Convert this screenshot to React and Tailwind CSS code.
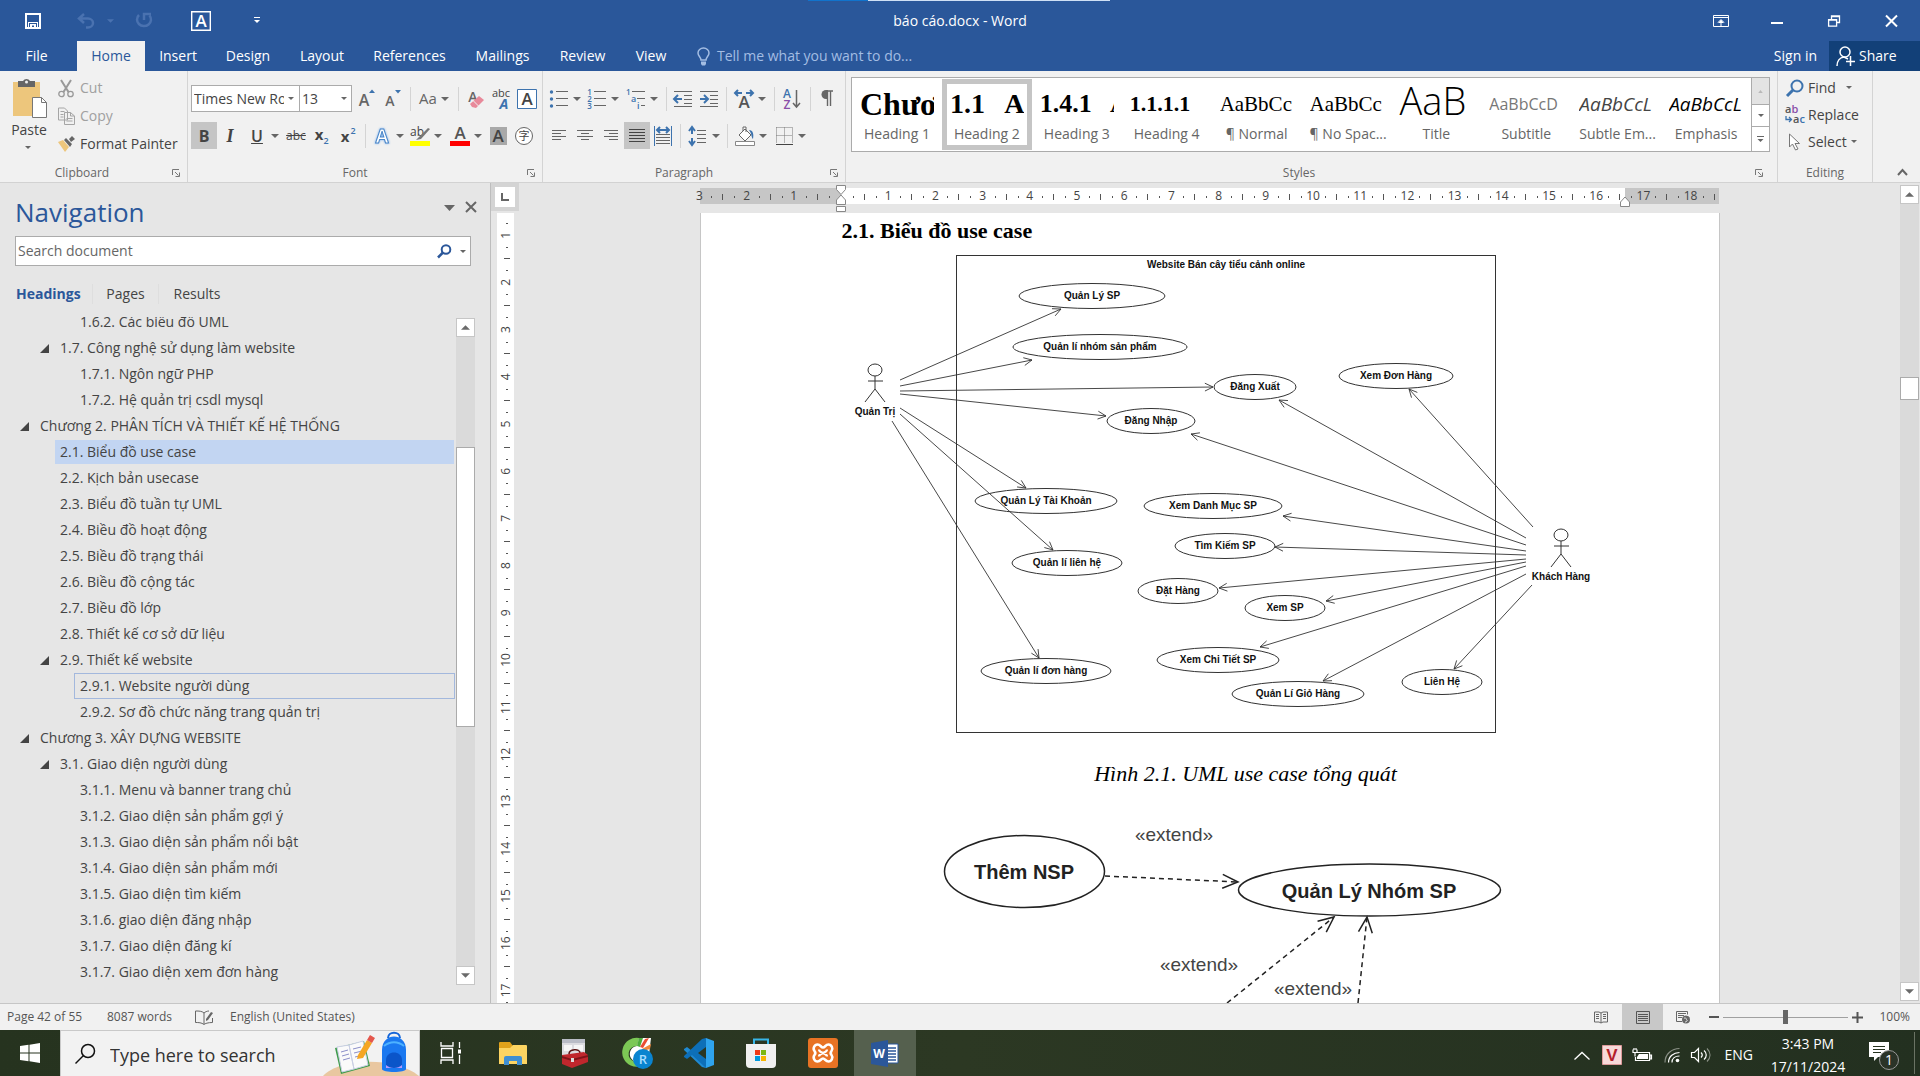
import React from "react";

/* ---------- small helpers ---------- */
const Caret = ({ className = "h-1 w-2" }) => (
  <svg className={"shrink-0 " + className} viewBox="0 0 8 4" aria-hidden="true">
    <path d="M0 0h8L4 4z" fill="#666" />
  </svg>
);

const Icon = ({ children, w = 20, h = 20, className = "" }) => (
  <svg width={w} height={h} viewBox={`0 0 ${w} ${h}`} className={"shrink-0 overflow-visible " + className} fill="none" aria-hidden="true">
    {children}
  </svg>
);

const Tool = ({ label, children, split, active, className = "w-[26px]" }) => (
  <button
    type="button"
    aria-label={label}
    className={"flex h-[27px] shrink-0 items-center justify-center gap-1 " + (active ? "bg-[#c5c5c5] " : "") + className}
  >
    {children}
    {split && <Caret />}
  </button>
);

const Sep = () => (
  <span className="flex h-6 w-2 shrink-0 justify-center">
    <span className="w-px bg-[#d4d4d4]" />
  </span>
);

const GroupLabel = ({ children, launcher = true }) => (
  <div className="mt-auto flex h-[18px] items-center pr-[7px]">
    <span className="flex-1 text-center text-xs text-[#666]">{children}</span>
    {launcher && (
      <button type="button" aria-label={children + " settings"} className="ml-2">
        <Icon w={8} h={8}>
          <path d="M.5 6V.5H7M3 3l3.500 3.500M7.500 3.500v4h-4" stroke="#777" />
        </Icon>
      </button>
    )}
  </div>
);

const sans = "'Open Sans','Noto Sans',sans-serif";
const T = ({ children, ...p }) => (
  <text fontFamily={sans} {...p}>
    {children}
  </text>
);

const lines = (rows, color = "#666") =>
  rows.map(([x1, x2, y], i) => <path key={i} d={`M${x1} ${y}.5H${x2}`} stroke={color} />);

/* ---------- title bar ---------- */
function TitleBar() {
  return (
    <header className="relative grid h-[41px] shrink-0 grid-cols-[1fr_auto_1fr] items-center text-white">
      <div className="absolute left-[808px] top-0 flex h-px w-[302px]">
        <span className="w-[60px] bg-[#1173cc]" />
        <span className="flex-1 bg-[#cfe0f5]" />
      </div>
      <div className="flex items-center pl-[25px]">
        <button type="button" aria-label="Save" className="mr-9">
          <Icon w={16} h={16}>
            <path d="M1 1h14v14H1z" stroke="#fff" strokeWidth="2" />
            <path d="M3 9h10v6H3z" fill="#fff" />
            <path d="M4 10h8v6H4z" fill="#2a579a" />
            <path d="M5 11h6v4H5z" fill="#fff" />
            <path d="M7 12.500h2V15H7z" fill="#2a579a" />
            <path d="M1 15h14" stroke="#fff" strokeWidth="2" />
          </Icon>
        </button>
        <button type="button" aria-label="Undo" className="flex items-center gap-3">
          <Icon w={18} h={16}>
            <path d="M7 1 2 5.500l5 4.500M2 5.500h9a5 4.500 0 0 1 0 9H9" stroke="#4a72b0" strokeWidth="2.500" />
          </Icon>
          <svg className="h-1 w-[7px]" viewBox="0 0 8 4">
            <path d="M0 0h8L4 4z" fill="#4a72b0" />
          </svg>
        </button>
        <button type="button" aria-label="Redo" className="ml-[22px]">
          <Icon w={17} h={17}>
            <path d="M3 3A7 6.500 0 1 0 13.500 3.500M8 8V2h7" stroke="#4a72b0" strokeWidth="2.500" />
          </Icon>
        </button>
        <button type="button" aria-label="Character border" className="ml-[38px]">
          <Icon w={20} h={20}>
            <path d="M.7.7h18.600v18.600H.7z" stroke="#fff" strokeWidth="1.400" />
            <T x="10" y="16" fontSize="17" fontWeight="600" fill="#fff" textAnchor="middle">A</T>
          </Icon>
        </button>
        <button type="button" aria-label="Customize toolbar" className="ml-[43px]">
          <Icon w={6} h={7}>
            <path d="M0 .5h6" stroke="#fff" />
            <path d="M0 3h6L3 6z" fill="#fff" />
          </Icon>
        </button>
      </div>
      <h1 className="text-sm">báo cáo.docx - Word</h1>
      <div className="flex items-center justify-end pr-[22px]">
        <button type="button" aria-label="Ribbon display options" className="mr-[42px]">
          <Icon w={16} h={12}>
            <path d="M.5.500h15v11H.5zM0 2.500h16M8 11V5M5 7.500 8 4.500l3 3" stroke="#fff" />
            <path d="M5 8l3-3 3 3z" fill="#fff" />
          </Icon>
        </button>
        <button type="button" aria-label="Minimize" className="mr-[45px]">
          <Icon w={12} h={12}><path d="M0 8h12" stroke="#fff" strokeWidth="2" /></Icon>
        </button>
        <button type="button" aria-label="Restore" className="mr-[45px]">
          <Icon w={12} h={12}>
            <path d="M.6 4.600h8v6.500h-8zM.6 5.200h8M3.500 4V1h8v6.500H9M3.500 1.500h8" stroke="#fff" strokeWidth="1.300" />
          </Icon>
        </button>
        <button type="button" aria-label="Close">
          <Icon w={13} h={12}><path d="m1 .5 11 11M12 .5 1 11.500" stroke="#fff" strokeWidth="2" /></Icon>
        </button>
      </div>
    </header>
  );
}

/* ---------- tabs ---------- */
const tabs = [
  ["File", "w-[73px] mr-1"],
  ["Home", "w-[68px] bg-[#f1f1f1] text-[#2a579a]"],
  ["Insert", "w-[66px]"],
  ["Design", "w-[74px]"],
  ["Layout", "w-[74px]"],
  ["References", "w-[101px]"],
  ["Mailings", "w-[85px]"],
  ["Review", "w-[75px]"],
  ["View", "w-[62px]"],
];

function TabRow() {
  return (
    <nav className="flex h-[30px] shrink-0 text-sm text-white">
      {tabs.map(([t, c]) => (
        <button key={t} type="button" className={"shrink-0 " + c}>{t}</button>
      ))}
      <button type="button" className="ml-[15px] flex items-center gap-[7px] text-[#a3bde3]">
        <Icon w={13} h={19}>
          <path d="M4 13c0-3-3-3.500-3-7a5.500 5 0 0 1 11 0c0 3.500-3 4-3 7z" stroke="#a3bde3" strokeWidth="1.500" />
          <path d="M4 14.500h5v2.500l-1 1.500H5L4 17z" fill="#a3bde3" />
        </Icon>
        Tell me what you want to do...
      </button>
      <button type="button" className="ml-auto pr-3">Sign in</button>
      <button type="button" className="flex w-[91px] items-center gap-1 bg-[#124078] pl-[7px]">
        <Icon w={20} h={20} className="-mr-px">
          <circle cx="9" cy="6" r="5" stroke="#fff" strokeWidth="1.500" />
          <path d="M1 20c0-5 3-8.500 7-9l4 2M14.500 10v10M10 15.500h9" stroke="#fff" strokeWidth="1.500" />
        </Icon>
        Share
      </button>
    </nav>
  );
}

/* ---------- ribbon ---------- */
function Clipboard() {
  return (
    <section className="flex w-[188px] shrink-0 flex-col border-r border-[#d4d4d4]">
      <div className="flex pt-[3px]">
        <button type="button" className="flex w-[56px] flex-col items-center text-sm text-[#444]">
          <Icon w={34} h={40} className="ml-1 mt-1">
            <path d="M0 4h27v34H0z" fill="#edc67c" />
            <path d="M5 3h5a4 4 0 0 1 7 0h5v6H5z" fill="#666" />
            <circle cx="13.500" cy="4" r="1.500" fill="#f1f1f1" />
            <path d="M19.500 19.500h9l5 5v15h-14z" fill="#fff" stroke="#777" />
            <path d="M28.500 19.500v5h5" stroke="#777" />
          </Icon>
          <span className="mt-[2px] pl-[2px]">Paste</span>
          <Caret className="mt-[6px] h-[3px] w-[6px]" />
        </button>
        <div className="flex flex-col pl-[2px] text-sm text-[#444]">
          <button type="button" className="flex h-7 items-center gap-[6px] text-[#a0a0a0]">
            <Icon w={16} h={19}>
              <path d="M3 1l7.500 12M13 1 5.500 13" stroke="#999" strokeWidth="2" />
              <circle cx="3.500" cy="15" r="2.700" stroke="#999" strokeWidth="1.300" />
              <circle cx="12.500" cy="15" r="2.700" stroke="#999" strokeWidth="1.300" />
            </Icon>
            Cut
          </button>
          <button type="button" className="flex h-7 items-center gap-[5px] text-[#a0a0a0]">
            <Icon w={17} h={18}>
              <path d="M.5 1h6l3 3v9h-9zM6.500 5.500h6l4 3.500v8.500h-10z" fill="#f1f1f1" stroke="#a5a5a5" />
              <path d="M2.500 4.500h4M2.500 7.500h3M2.500 10h3M12.500 5.500V9h4M8.500 11.500h6M8.500 14h6" stroke="#a5a5a5" />
            </Icon>
            Copy
          </button>
          <button type="button" className="flex h-7 items-center gap-[5px]">
            <Icon w={17} h={16}>
              <path d="M0 6l5-2 6 7-4 5z" fill="#edc67c" />
              <path d="m6 4 2-2 6 6-2 3zM11 3l3-3 3 3-4 3z" fill="#666" />
            </Icon>
            Format Painter
          </button>
        </div>
      </div>
      <GroupLabel>Clipboard</GroupLabel>
    </section>
  );
}

function FontGroup() {
  return (
    <section className="flex w-[355px] shrink-0 flex-col border-r border-[#d4d4d4] pl-[3px]">
      <div className="mt-[14px] flex h-[27px] items-center">
        <div className="flex h-[27px] w-[109px] items-center border border-[#ababab] bg-white pr-[5px]">
          <input aria-label="Font" defaultValue="Times New Roman" className="w-0 flex-1 pl-[2px] text-sm text-[#444] outline-none" />
          <Caret className="ml-1 h-[3px] w-[6px]" />
        </div>
        <div className="-ml-px mr-[2px] flex h-[27px] w-[53px] items-center border border-[#ababab] bg-white pr-1">
          <input aria-label="Font size" defaultValue="13" className="w-0 flex-1 pl-[2px] text-sm text-[#444] outline-none" />
          <Caret className="h-[3px] w-[6px]" />
        </div>
        <Tool label="Grow font">
          <Icon>
            <T x="7" y="17" fontSize="16" fontWeight="600" fill="#666" textAnchor="middle">A</T>
            <path d="M12 4l3-3.500L18 4z" fill="#3d73ae" />
          </Icon>
        </Tool>
        <Tool label="Shrink font">
          <Icon>
            <T x="7" y="17" fontSize="14" fontWeight="600" fill="#666" textAnchor="middle">A</T>
            <path d="M12 1l3 3.500L18 1z" fill="#3d73ae" />
          </Icon>
        </Tool>
        <Sep />
        <Tool label="Change case" split className="w-10">
          <span className="text-[15px] font-medium text-[#666]">Aa</span>
        </Tool>
        <Sep />
        <Tool label="Clear formatting" className="w-7">
          <Icon>
            <T x="7" y="13" fontSize="14" fontWeight="600" fill="#666" textAnchor="middle">A</T>
            <path d="m4 15 9-8 5 4-8 8-4-1z" fill="#e8899a" />
            <path d="m7.500 12 5 5" stroke="#f1f1f1" />
          </Icon>
        </Tool>
        <Tool label="Text style">
          <Icon h={22}>
            <T x="8" y="9" fontSize="11" fill="#444" textAnchor="middle">abc</T>
            <T x="11" y="21" fontSize="14" fontWeight="700" fontStyle="italic" fill="#3d73ae" textAnchor="middle">A</T>
          </Icon>
        </Tool>
        <Tool label="Enclose text" className="w-[22px]">
          <Icon>
            <path d="M.5.500h19v19H.5z" fill="#fff" stroke="#3d73ae" />
            <T x="10" y="16" fontSize="17" fontWeight="600" fill="#444" textAnchor="middle">A</T>
          </Icon>
        </Tool>
      </div>
      <div className="mt-[10px] flex h-[27px] items-center">
        <Tool label="Bold" active><span className="text-base font-bold text-[#444]">B</span></Tool>
        <Tool label="Italic"><span className="font-['Liberation_Serif',serif] text-lg font-bold italic text-[#444]">I</span></Tool>
        <Tool label="Underline" split className="w-10"><span className="w-5 text-center text-base font-semibold text-[#444] underline">U</span></Tool>
        <Tool label="Strikethrough"><span className="text-xs text-[#444] line-through">abc</span></Tool>
        <Tool label="Subscript">
          <Icon>
            <T x="7" y="14" fontSize="15" fontWeight="700" fill="#444" textAnchor="middle">x</T>
            <T x="14" y="18" fontSize="9" fontWeight="600" fill="#3d73ae" textAnchor="middle">2</T>
          </Icon>
        </Tool>
        <Tool label="Superscript">
          <Icon>
            <T x="7" y="16" fontSize="15" fontWeight="700" fill="#444" textAnchor="middle">x</T>
            <T x="15" y="8" fontSize="9" fontWeight="600" fill="#3d73ae" textAnchor="middle">2</T>
          </Icon>
        </Tool>
        <Sep />
        <Tool label="Text effects" split className="w-[37px]">
          <Icon>
            <T x="10" y="17" fontSize="19" fontWeight="700" fill="#fff" stroke="#4a86c8" strokeWidth="1" textAnchor="middle" className="drop-shadow-[0_0_1px_#7fb2ee]">A</T>
          </Icon>
        </Tool>
        <Tool label="Highlight color" split className="w-10">
          <Icon>
            <T x="7" y="10" fontSize="12" fill="#444" textAnchor="middle">ab</T>
            <path d="m18 2-9 9-3 3 5-1 9-10z" fill="#777" />
            <path d="M0 15h20v5H0z" fill="#ff0" />
          </Icon>
        </Tool>
        <Tool label="Font color" split className="w-[39px]">
          <Icon>
            <T x="10" y="13" fontSize="17" fontWeight="600" fill="#555" textAnchor="middle">A</T>
            <path d="M0 15h20v5H0z" fill="#f00" />
          </Icon>
        </Tool>
        <Tool label="Character shading">
          <Icon w={17} h={18}>
            <path d="M0 0h17v18H0z" fill="#a9a9a9" />
            <T x="8" y="15" fontSize="17" fontWeight="600" fill="#444" textAnchor="middle">A</T>
          </Icon>
        </Tool>
        <Tool label="Enclose characters">
          <Icon>
            <circle cx="10" cy="10" r="8.500" fill="#fff" stroke="#666" />
            <text x="10" y="14" fontSize="11" fontFamily="'Noto Sans CJK SC',sans-serif" fill="#444" textAnchor="middle">字</text>
          </Icon>
        </Tool>
      </div>
      <GroupLabel>Font</GroupLabel>
    </section>
  );
}

const blue = "#3d73ae";
function Paragraph() {
  return (
    <section className="flex w-[303px] shrink-0 flex-col border-r border-[#d4d4d4] pl-[3px]">
      <div className="mt-[14px] flex h-[27px] items-center">
        <Tool label="Bullets" split className="w-[38px]">
          <Icon>
            {[3, 10, 17].map((y) => <circle key={y} cx="2.500" cy={y} r="1.700" fill={blue} />)}
            {lines([[7, 19, 2], [7, 19, 9], [7, 19, 16]])}
          </Icon>
        </Tool>
        <Tool label="Numbering" split className="w-[38px]">
          <Icon>
            {[["1", 6], ["2", 13], ["3", 20]].map(([t, y]) => <T key={t} x="2.500" y={y} fontSize="8" fontWeight="600" fill={blue} textAnchor="middle">{t}</T>)}
            {lines([[7, 19, 2], [7, 19, 9], [7, 19, 16]])}
          </Icon>
        </Tool>
        <Tool label="Multilevel list" split className="w-10">
          <Icon>
            <T x="0" y="6" fontSize="8" fontWeight="600" fill={blue}>1</T>
            <T x="5" y="13" fontSize="9" fontWeight="600" fill={blue}>a</T>
            <T x="11" y="20" fontSize="9" fontWeight="600" fill={blue}>i</T>
            {lines([[6, 19, 2], [11, 19, 9], [15, 19, 16]])}
          </Icon>
        </Tool>
        <Sep />
        <Tool label="Decrease indent">
          <Icon>
            {lines([[1, 19, 2], [11, 19, 6], [11, 19, 10], [11, 19, 14], [1, 19, 17]])}
            <path d="M9 10H2M5 6l-4 4 4 4" stroke={blue} strokeWidth="2" />
          </Icon>
        </Tool>
        <Tool label="Increase indent">
          <Icon>
            {lines([[1, 19, 2], [11, 19, 6], [11, 19, 10], [11, 19, 14], [1, 19, 17]])}
            <path d="M1 10h7M5 6l4 4-4 4" stroke={blue} strokeWidth="2" />
          </Icon>
        </Tool>
        <Sep />
        <Tool label="Asian layout" split className="w-10">
          <Icon>
            <T x="10" y="19" fontSize="17" fontWeight="600" fill="#555" textAnchor="middle">A</T>
            <path d="M8 4H1M4 1 1 4l3 3M12 4h7M16 1l3 3-3 3" stroke={blue} strokeWidth="2" />
          </Icon>
        </Tool>
        <Sep />
        <Tool label="Sort" className="w-7">
          <Icon h={22}>
            <T x="5" y="10" fontSize="12" fontWeight="600" fill={blue} textAnchor="middle">A</T>
            <T x="5" y="21" fontSize="12" fontWeight="600" fill="#8a4fa8" textAnchor="middle">Z</T>
            <path d="M14.500 2v17M11 15l3.500 4 3.500-4" stroke="#666" strokeWidth="1.500" />
          </Icon>
        </Tool>
        <Sep />
        <Tool label="Show marks">
          <Icon w={12} h={17}>
            <path d="M5 1h7M6.500 1v15M9.500 1v15" stroke="#666" strokeWidth="1.400" />
            <path d="M7 0H5a4.500 4.500 0 0 0 0 9h2z" fill="#666" />
          </Icon>
        </Tool>
      </div>
      <div className="mt-[10px] flex h-[27px] items-center">
        <Tool label="Align left"><Icon w={14} h={14}>{lines([[0, 14, 1], [0, 9, 4], [0, 14, 7], [0, 9, 10]])}</Icon></Tool>
        <Tool label="Center"><Icon w={16} h={14}>{lines([[0, 16, 1], [4, 12, 4], [0, 16, 7], [4, 12, 10]])}</Icon></Tool>
        <Tool label="Align right"><Icon w={14} h={14}>{lines([[0, 14, 1], [5, 14, 4], [0, 14, 7], [5, 14, 10]])}</Icon></Tool>
        <Tool label="Justify" active><Icon w={16} h={14}>{lines([[0, 16, 0], [0, 16, 3], [0, 16, 6], [0, 16, 9], [0, 16, 12]], "#444")}</Icon></Tool>
        <Tool label="Distribute">
          <Icon>
            <path d="M1.500 0v20M18.500 0v20" stroke={blue} />
            <path d="M4 4h12M7 1 4 4l3 3M13 1l3 3-3 3" stroke={blue} strokeWidth="2" />
            {lines([[3, 17, 8], [3, 17, 11], [3, 17, 14], [3, 17, 17]])}
          </Icon>
        </Tool>
        <Sep />
        <Tool label="Line spacing" split className="w-[39px]">
          <Icon>
            <path d="M4 2v6M1 5l3-4 3 4M4 12v6M1 15l3 4 3-4" stroke={blue} strokeWidth="2" />
            {lines([[9, 18, 4], [9, 18, 8], [9, 18, 12], [9, 18, 16]])}
          </Icon>
        </Tool>
        <Sep />
        <Tool label="Shading" split className="w-[39px]">
          <Icon>
            <path d="m4 9 6-6 6 6-6 6zM8 5V1h3v5" fill="#fff" stroke="#666" />
            <path d="M14 4c4 0 5 4 4 9-2-2-1-5-4-9z" fill={blue} />
            <path d="M.5 15.500h19v4H.5z" fill="#fff" stroke="#888" />
          </Icon>
        </Tool>
        <Tool label="Borders" split className="w-10">
          <Icon>
            <path d="M2.500 1.500h16M18.500 1.500v16M2.500 1.500v16M10.500 1.500v16M2.500 9.500h16" stroke="#777" strokeDasharray="1 1" />
            <path d="M2 18.500h17" stroke="#444" />
          </Icon>
        </Tool>
      </div>
      <GroupLabel>Paragraph</GroupLabel>
    </section>
  );
}

const styleCells = [
  ["Heading 1", "Chươ", "font-['Liberation_Serif',serif] text-[32px] font-bold text-black"],
  ["Heading 2", "1.1\u00a0\u00a0 A", "font-['Liberation_Serif',serif] text-[28px] font-bold text-black"],
  ["Heading 3", "1.4.1\u00a0\u00a0 A", "font-['Liberation_Serif',serif] text-[26px] font-bold text-black"],
  ["Heading 4", "1.1.1.1", "font-['Liberation_Serif',serif] text-[22px] font-bold text-black"],
  ["¶ Normal", "AaBbCc", "font-['Liberation_Serif',serif] text-[21px] text-black"],
  ["¶ No Spac...", "AaBbCc", "font-['Liberation_Serif',serif] text-[21px] text-black"],
  ["Title", "AaB", "pb-1 text-[38px] font-light text-black"],
  ["Subtitle", "AaBbCcD", "text-[16px] text-[#777]"],
  ["Subtle Em...", "AaBbCcL", "text-[19px] italic text-[#444]"],
  ["Emphasis", "AaBbCcL", "text-[19px] italic text-black"],
];

function Styles() {
  return (
    <section className="flex min-w-0 flex-1 flex-col border-r border-[#d4d4d4] pl-[5px] pr-[7px]">
      <div className="mt-[6px] flex h-[75px] shrink-0 border border-[#ababab] bg-white">
        <div className="flex min-w-0 flex-1 overflow-hidden py-px">
          {styleCells.map(([name, sample, cls], i) => (
            <button
              key={name}
              type="button"
              className={"flex w-0 flex-1 flex-col overflow-hidden text-left " + (i === 1 ? "border-[5px] border-[#c5c5c5] px-[3px]" : "px-2 py-[5px]")}
            >
              <span className="flex h-10 w-full items-end overflow-hidden">
                <span className={"whitespace-nowrap leading-10 " + cls}>{sample}</span>
              </span>
              <span className="w-full whitespace-nowrap text-center text-sm text-[#666]">{name}</span>
            </button>
          ))}
        </div>
        <div className="flex w-[18px] flex-col border-l border-[#ababab]">
          <button type="button" aria-label="Scroll styles up" className="flex h-[26px] items-center justify-center bg-[#e3e3e3]">
            <svg className="h-[3px] w-[5px]" viewBox="0 0 6 4"><path d="M0 4h6L3 0z" fill="#b8b8b8" /></svg>
          </button>
          <button type="button" aria-label="Scroll styles down" className="flex h-[23px] items-center justify-center border-y border-[#ababab]">
            <svg className="h-[3px] w-[6px]" viewBox="0 0 6 3"><path d="M0 0h6L3 3z" fill="#666" /></svg>
          </button>
          <button type="button" aria-label="More styles" className="flex flex-1 items-center justify-center">
            <Icon w={7} h={7}><path d="M0 .5h7" stroke="#666" /><path d="M.5 3h6l-3 3z" fill="#666" /></Icon>
          </button>
        </div>
      </div>
      <GroupLabel>Styles</GroupLabel>
    </section>
  );
}

function Editing() {
  return (
    <section className="flex w-[95px] shrink-0 flex-col border-r border-[#d4d4d4] pl-[7px] text-sm text-[#444]">
      <button type="button" className="mt-[3px] flex h-[27px] items-center gap-1">
        <Icon w={19} h={18}>
          <circle cx="12" cy="7" r="5.500" stroke={blue} strokeWidth="2" />
          <path d="m8 11-6 6" stroke={blue} strokeWidth="3" />
        </Icon>
        Find <Caret className="ml-[6px] h-[3px] w-[6px]" />
      </button>
      <button type="button" className="flex h-[27px] items-center gap-1">
        <Icon w={19} h={19}>
          <T x="0" y="8" fontSize="11" fontWeight="600" fill="#555">a<tspan fill="#8a4fa8">b</tspan></T>
          <T x="8" y="18" fontSize="11" fontWeight="600" fill="#555">a<tspan fill={blue}>c</tspan></T>
          <path d="M1 11v3.500h5M4 12l2.500 2.500L4 17" stroke={blue} strokeWidth="1.300" />
        </Icon>
        Replace
      </button>
      <button type="button" className="flex h-[27px] items-center gap-1">
        <Icon w={19} h={18}>
          <path d="M4.500 1v13l3-3 3 6 2.500-1-3-5.500h4.500z" fill="#fff" stroke="#777" />
        </Icon>
        Select <Caret className="h-[3px] w-[6px]" />
      </button>
      <GroupLabel launcher={false}>Editing</GroupLabel>
    </section>
  );
}

function Ribbon() {
  return (
    <div className="flex h-28 shrink-0 overflow-hidden border-b border-[#d2d2d2] bg-[#f1f1f1]">
      <Clipboard />
      <FontGroup />
      <Paragraph />
      <Styles />
      <Editing />
      <button type="button" aria-label="Collapse the ribbon" className="mb-[6px] mt-auto flex w-[47px] shrink-0 justify-center pl-3">
        <Icon w={11} h={8}><path d="M1 7l4.500-5L10 7" stroke="#666" strokeWidth="2" /></Icon>
      </button>
    </div>
  );
}

/* ---------- navigation pane ---------- */
const outline = [
  [3, "1.6.2. Các biểu đồ UML"],
  [2, "1.7. Công nghệ sử dụng làm website", true],
  [3, "1.7.1. Ngôn ngữ PHP"],
  [3, "1.7.2. Hệ quản trị csdl mysql"],
  [1, "Chương 2. PHÂN TÍCH VÀ THIẾT KẾ HỆ THỐNG", true],
  [2, "2.1. Biểu đồ use case"],
  [2, "2.2. Kịch bản usecase"],
  [2, "2.3. Biểu đồ tuần tự UML"],
  [2, "2.4. Biều đồ hoạt động"],
  [2, "2.5. Biều đồ trạng thái"],
  [2, "2.6. Biều đồ cộng tác"],
  [2, "2.7. Biều đồ lớp"],
  [2, "2.8. Thiết kế cơ sở dữ liệu"],
  [2, "2.9. Thiết kế website", true],
  [3, "2.9.1. Website người dùng"],
  [3, "2.9.2. Sơ đồ chức năng trang quản trị"],
  [1, "Chương 3. XÂY DỰNG WEBSITE", true],
  [2, "3.1. Giao diện người dùng", true],
  [3, "3.1.1. Menu và banner trang chủ"],
  [3, "3.1.2. Giao diện sản phẩm gợi ý"],
  [3, "3.1.3. Giao diện sản phẩm nổi bật"],
  [3, "3.1.4. Giao diện sản phẩm mới"],
  [3, "3.1.5. Giao diện tìm kiếm"],
  [3, "3.1.6. giao diện đăng nhập"],
  [3, "3.1.7. Giao diện đăng kí"],
  [3, "3.1.7. Giao diện xem đơn hàng"],
];
const indent = { 1: "pl-5", 2: "pl-10", 3: "pl-[60px]" };

const ScrollBtn = ({ up, label }) => (
  <button type="button" aria-label={label} className="flex h-[19px] w-full shrink-0 items-center justify-center border border-[#c6c6c6] bg-white">
    <svg className="h-[5px] w-[9px]" viewBox="0 0 10 5"><path d={up ? "M0 5h10L5 0z" : "M0 0h10L5 5z"} fill="#6a6a6a" /></svg>
  </button>
);

function NavigationPane() {
  return (
    <aside className="flex w-[491px] shrink-0 flex-col border-r border-[#bdbdbd]">
      <div className="flex h-[53px] shrink-0 items-center pl-[15px] pr-[13px]">
        <h2 className="flex-1 pt-1 text-[26px] leading-8 text-[#2b579a]">Navigation</h2>
        <button type="button" aria-label="Pane options" className="mb-1 mr-[10px]">
          <svg className="h-[6px] w-[11px]" viewBox="0 0 11 6"><path d="M0 0h11L5.500 6z" fill="#666" /></svg>
        </button>
        <button type="button" aria-label="Close pane" className="mb-[6px]">
          <Icon w={12} h={12}><path d="M1 1l10 10M11 1 1 11" stroke="#666" strokeWidth="2" /></Icon>
        </button>
      </div>
      <div className="ml-[15px] mr-[19px] flex h-[30px] shrink-0 items-center border border-[#ababab] bg-white">
        <input aria-label="Search document" placeholder="Search document" className="min-w-0 flex-1 pl-[2px] text-sm outline-none placeholder:text-[#666]" />
        <button type="button" aria-label="Search" className="mr-2">
          <Icon w={15} h={14}>
            <circle cx="9" cy="5.500" r="4.300" stroke="#2b579a" strokeWidth="2" />
            <path d="m6 8.500-5 5" stroke="#2b579a" strokeWidth="2.500" />
          </Icon>
        </button>
        <Caret className="mr-1 h-[3px] w-[6px]" />
      </div>
      <div className="mt-4 flex h-6 shrink-0 items-center pl-4 text-sm text-[#444]">
        <button type="button" className="w-[77px] border-r border-[#dedede] text-left font-bold text-[#2b579a]">Headings</button>
        <button type="button" className="w-[66px] border-r border-[#dedede] text-center">Pages</button>
        <button type="button" className="w-[76px] text-center">Results</button>
      </div>
      <div className="mb-[18px] mt-[11px] flex min-h-0 flex-1">
        <ul className="flex min-w-0 flex-1 flex-col justify-end overflow-hidden pl-5 text-sm text-[#444]">
          {outline.map(([lvl, text, open], i) => (
            <li key={i} className="relative flex h-[26px] shrink-0">
              {open && (
                <span className={"absolute inset-y-0 left-0 flex items-center " + (lvl === 2 ? "pl-5" : "")}>
                  <svg className="h-[9px] w-[9px]" viewBox="0 0 9 9"><path d="M9 0v9H0z" fill="#444" /></svg>
                </span>
              )}
              {i === 5 ? (
                <a href="#h5" className="my-px ml-[35px] mr-[2px] flex flex-1 items-center bg-[#c2d5f2] pl-[5px]">{text}</a>
              ) : i === 14 ? (
                <a href="#h14" className="ml-[54px] mr-px flex flex-1 items-center border border-[#a3b8dd] pl-[5px]">{text}</a>
              ) : (
                <a href={"#h" + i} className={"flex flex-1 items-center whitespace-nowrap " + indent[lvl]}>{text}</a>
              )}
            </li>
          ))}
        </ul>
        <div className="mr-[15px] mt-px flex w-[19px] shrink-0 flex-col bg-[#dadada]">
          <ScrollBtn up label="Scroll outline up" />
          <div className="flex flex-1 flex-col">
            <div className="flex-[110]" />
            <div className="flex-[279] border border-[#ababab] bg-white" />
            <div className="flex-[239]" />
          </div>
          <ScrollBtn label="Scroll outline down" />
        </div>
      </div>
    </aside>
  );
}

/* ---------- rulers ---------- */
const CM = 47.2;

function VerticalRuler() {
  return (
    <div className="flex w-7 shrink-0 flex-col items-center">
      <button type="button" aria-label="Tab stop type" className="flex h-7 w-full shrink-0 items-center justify-center border-[4px] border-[#d4d4d4] bg-white">
        <Icon w={8} h={8}><path d="M1 0v7h7" stroke="#666" strokeWidth="2" /></Icon>
      </button>
      <div className="mt-[2px] min-h-0 w-[17px] flex-1 overflow-hidden bg-white">
        <svg width="17" height="790" viewBox="0 213 17 790" aria-hidden="true">
          {Array.from({ length: 18 }, (_, i) => {
            const y = 188 + CM * i;
            return (
              <g key={i}>
                {i > 0 && (
                  <T fontSize="12" fill="#444" textAnchor="middle" transform={`translate(13 ${y}) rotate(-90)`}>{i}</T>
                )}
                <path d={`M9 ${Math.round(y + 12)}.5h2M9 ${Math.round(y + 35)}.5h2M7 ${Math.round(y + 23)}.5h6`} stroke="#555" />
              </g>
            );
          })}
        </svg>
      </div>
    </div>
  );
}

function HorizontalRuler() {
  const marks = [];
  for (let i = -3; i <= 18; i++) {
    const x = 141 + CM * i;
    marks.push(
      <g key={i}>
        {i !== 0 && <T x={x} y="12" fontSize="12" fill="#444" textAnchor="middle">{Math.abs(i)}</T>}
        <path d={`M${Math.round(x + 12)}.5 8v2M${Math.round(x + 23)}.5 6v6` + (i < 18 ? `M${Math.round(x + 35)}.5 8v2` : "")} stroke="#555" />
      </g>
    );
  }
  return (
    <svg className="mx-auto block w-full max-w-[1019px] shrink-0 overflow-visible" height="28" viewBox="0 -3 1019 28" aria-hidden="true">
      <path d="M0 0h1019v16H0z" fill="#c6c6c6" />
      <path d="M141 0h784v16H141z" fill="#fff" />
      {marks}
      <path d="M136.500-2.500h9v4L141 6.500l-4.500-5zM136.500 16.500V12l4.500-5 4.500 5v4.500zM136.500 18.500h9v5h-9z" fill="#fff" stroke="#888" />
      <path d="M920.500 18.500V14l4.500-5 4.500 5v4.500z" fill="#fff" stroke="#888" />
    </svg>
  );
}

/* ---------- use case diagrams ---------- */
const cases = [
  ["Quản Lý SP", 1092, 296, 73],
  ["Quản lí nhóm sản phẩm", 1100, 347, 87],
  ["Đăng Xuất", 1255, 387, 41],
  ["Đăng Nhập", 1151, 421, 44],
  ["Xem Đơn Hàng", 1396, 376, 57],
  ["Quản Lý Tài Khoản", 1046, 501, 71],
  ["Xem Danh Mục SP", 1213, 506, 69],
  ["Tìm Kiếm SP", 1225, 546, 50],
  ["Quản lí liên hệ", 1067, 563, 55],
  ["Đặt Hàng", 1178, 591, 40],
  ["Xem SP", 1285, 608, 40],
  ["Xem Chi Tiết SP", 1218, 660, 61],
  ["Quản lí đơn hàng", 1046, 671, 65],
  ["Quản Lí Giỏ Hàng", 1298, 694, 66],
  ["Liên Hệ", 1442, 682, 40],
];
const links = [
  [900, 380, 1061, 309], [900, 386, 1032, 360], [900, 391, 1213, 387], [900, 394, 1106, 416],
  [900, 408, 1026, 488], [900, 414, 1053, 550], [892, 421, 1039, 658],
  [1533, 527, 1409, 389], [1526, 538, 1279, 400], [1526, 545, 1191, 434], [1526, 551, 1283, 516],
  [1526, 555, 1275, 547], [1526, 559, 1219, 588], [1526, 562, 1326, 601], [1526, 566, 1260, 647],
  [1526, 574, 1323, 681], [1532, 585, 1454, 669],
];

function arrowHead(x1, y1, x2, y2, len, spread) {
  const a = Math.atan2(y2 - y1, x2 - x1);
  const p = (s) => `${x2 - len * Math.cos(a + s)} ${y2 - len * Math.sin(a + s)}`;
  return `M${p(spread)}L${x2} ${y2}L${p(-spread)}`;
}

const Actor = ({ x, y, name }) => (
  <g stroke="#333" fill="none">
    <ellipse cx={x} cy={y} rx="7" ry="6" />
    <path d={`M${x} ${y + 6}v13M${x - 7} ${y + 11}h15M${x - 10} ${y + 32}l10-13 10 13`} />
    <text x={x} y={y + 45} fill="#111" stroke="none" textAnchor="middle" fontSize="10" fontWeight="700">{name}</text>
  </g>
);

function OverviewDiagram() {
  return (
    <svg className="block w-full" viewBox="701 250 1018 490" fontFamily="'Liberation Sans',sans-serif" role="img" aria-label="Website Bán cây tiểu cảnh online">
      <rect x="956.500" y="255.500" width="539" height="477" fill="none" stroke="#333" />
      <text x="1226" y="268" fontSize="10" fontWeight="700" fill="#111" textAnchor="middle">Website Bán cây tiểu cảnh online</text>
      {cases.map(([t, x, y, rx]) => (
        <g key={t}>
          <ellipse cx={x} cy={y} rx={rx} ry="12.500" fill="none" stroke="#333" />
          <text x={x} y={y + 3} fontSize="10" fontWeight="700" fill="#111" textAnchor="middle">{t}</text>
        </g>
      ))}
      {links.map((l, i) => (
        <path key={i} d={`M${l[0]} ${l[1]}L${l[2]} ${l[3]}` + arrowHead(...l, 9, 0.45)} fill="none" stroke="#333" strokeWidth="0.900" />
      ))}
      <Actor x={875} y={370} name="Quản Trị" />
      <Actor x={1561} y={535} name="Khách Hàng" />
    </svg>
  );
}

const extendLinks = [
  [1105, 876, 1238, 882],
  [1227, 1003, 1334, 917],
  [1358, 1003, 1367, 917],
];

function GroupDiagram() {
  return (
    <svg className="block w-full" viewBox="701 800 1018 203" fontFamily="'Liberation Sans',sans-serif" role="img" aria-label="Quản Lý Nhóm SP">
      <g fill="none" stroke="#222" strokeWidth="1.500">
        <ellipse cx="1024.500" cy="871.500" rx="80" ry="36" />
        <ellipse cx="1369.500" cy="890" rx="131" ry="26" />
        {extendLinks.map((l, i) => (
          <g key={i}>
            <path d={`M${l[0]} ${l[1]}L${l[2]} ${l[3]}`} strokeDasharray="5 4" />
            <path d={arrowHead(...l, 17, 0.42)} />
          </g>
        ))}
      </g>
      <g fontSize="20" fontWeight="700" fill="#222" textAnchor="middle">
        <text x="1024" y="879">Thêm NSP</text>
        <text x="1369" y="898">Quản Lý Nhóm SP</text>
      </g>
      <g fontSize="19" fill="#444" textAnchor="middle">
        <text x="1174" y="841">«extend»</text>
        <text x="1199" y="971">«extend»</text>
        <text x="1313" y="995">«extend»</text>
      </g>
    </svg>
  );
}

function Workspace() {
  return (
    <main className="flex min-w-0 flex-1 pt-[2px]">
      <div className="flex min-w-0 flex-1 flex-col overflow-hidden">
        <HorizontalRuler />
        <article className="mx-auto min-h-0 w-full max-w-[1020px] flex-1 overflow-hidden border-x border-[#c6c6c6] bg-white font-['Liberation_Serif',serif] text-black">
          <h2 className="h-[37px] pl-[141px] text-[22px] font-bold leading-9">2.1. Biểu đồ use case</h2>
          <OverviewDiagram />
          <p className="h-[60px] pl-[72px] pt-[18px] text-center text-[22px] italic leading-8">Hình 2.1. UML use case tổng quát</p>
          <GroupDiagram />
        </article>
      </div>
      <div className="mb-[2px] mr-px flex w-[19px] shrink-0 flex-col bg-[#dadada]">
        <ScrollBtn up label="Scroll up" />
        <div className="flex flex-1 flex-col">
          <div className="flex-[173]" />
          <div className="flex-[21] border border-[#ababab] bg-white" />
          <div className="flex-[584]" />
        </div>
        <ScrollBtn label="Scroll down" />
      </div>
    </main>
  );
}

/* ---------- status bar ---------- */
function StatusBar() {
  return (
    <footer className="flex h-[27px] shrink-0 items-center border-t border-[#c6c6c6] bg-[#f1f1f1] pl-[7px] text-xs text-[#555]">
      <span className="w-[100px]">Page 42 of 55</span>
      <span className="w-[88px]">8087 words</span>
      <button type="button" aria-label="Proofing" className="mr-[17px]">
        <Icon w={18} h={15}>
          <path d="M9 3v11M9 3C7 1 4 1 .5 1v11.500c3 0 6 0 8.500 2 1-1 4-2 8.500-2V8M9 3c1-1 3-2 5-2" stroke="#666" />
          <path d="m11 9 5-7 2 1-5 7-2 1z" fill="#666" />
        </Icon>
      </button>
      <span className="flex-1">English (United States)</span>
      <button type="button" aria-label="Read mode" className="mr-[14px]">
        <Icon w={14} h={13}>
          <path d="M7 2v10M7 2 5 1H.5v10H5l2 1 2-1h4.500V1H9z" stroke="#666" />
          <path d="M2 3.500h3M2 5.500h3M2 7.500h3M9 3.500h3M9 5.500h3M9 7.500h3" stroke="#666" />
        </Icon>
      </button>
      <button type="button" aria-label="Print layout" className="flex h-full w-[41px] items-center justify-center bg-[#c8c8c8]">
        <Icon w={14} h={13}>
          <path d="M.5.500h13v12H.5z" stroke="#555" />
          {lines([[2, 12, 3], [2, 12, 5], [2, 12, 7], [2, 12, 9]], "#555")}
        </Icon>
      </button>
      <button type="button" aria-label="Web layout" className="ml-[13px] mr-[18px]">
        <Icon w={15} h={13}>
          <path d="M6 10.500H.5V.5h11v3" stroke="#666" />
          {lines([[2, 10, 2], [2, 8, 4], [2, 6, 6]])}
          <circle cx="10" cy="8.500" r="4" fill="#666" />
          <path d="M8 7.500c2-2 2 1 3 1.500s-1 2-2 2" stroke="#eee" />
        </Icon>
      </button>
      <button type="button" aria-label="Zoom out" className="mr-1"><Icon w={10} h={10}><path d="M0 5h10" stroke="#555" strokeWidth="2" /></Icon></button>
      <input
        type="range"
        aria-label="Zoom"
        defaultValue="50"
        className="h-4 w-[125px] appearance-none bg-transparent [&::-webkit-slider-runnable-track]:h-px [&::-webkit-slider-runnable-track]:bg-[#a0a0a0] [&::-webkit-slider-thumb]:-mt-[7px] [&::-webkit-slider-thumb]:h-[14px] [&::-webkit-slider-thumb]:w-[5px] [&::-webkit-slider-thumb]:appearance-none [&::-webkit-slider-thumb]:bg-[#666]"
      />
      <button type="button" aria-label="Zoom in" className="ml-1"><Icon w={11} h={11}><path d="M0 5.500h11M5.500 0v11" stroke="#555" strokeWidth="2" /></Icon></button>
      <span className="w-[57px] pr-[10px] text-right">100%</span>
    </footer>
  );
}

/* ---------- taskbar ---------- */
const apps = [
  ["Task View", (
    <Icon w={24} h={22}>
      <path d="M2 0v4h12V0M2 22v-4h12v4M2.500 6.500h11v9h-11zM20.500 0v6M20.500 13v9" stroke="#fff" strokeWidth="1.300" />
      <path d="M19 7.500h3v4h-3z" fill="#fff" />
    </Icon>
  )],
  ["File Explorer", (
    <Icon w={28} h={25}>
      <path d="M0 2a1 1 0 0 1 1-1h10l3 4v4H0z" fill="#e0a21b" />
      <path d="M0 7h11l3-3h13a1 1 0 0 1 1 1v18H0z" fill="#fcd462" />
      <path d="M5 24v-7a2 2 0 0 1 2-2h14a2 2 0 0 1 2 2v7h-5v-4h-8v4z" fill="#3f8fd2" />
    </Icon>
  )],
  ["Toolbox", (
    <Icon w={28} h={29}>
      <path d="M1 0h23v20H1z" fill="#dcdce0" />
      <path d="M1 0h23v4H1z" fill="#b9bcc6" />
      <path d="M3 6h8v6H3zM13 6h9v6h-9z" fill="#f6f6f6" />
      <path d="M8 15c0-5 11-6 11-1" stroke="#5a1414" strokeWidth="1.500" />
      <path d="M1 16l22-3 4 3v7l-16 6-10-4z" fill="#c0272d" />
      <path d="M1 17l10 3 16-4v2l-16 4-10-3z" fill="#7e1419" />
      <path d="M10 19h3v4h-3z" fill="#ddd" />
    </Icon>
  )],
  ["Browser", (
    <Icon w={32} h={32}>
      <path d="M18 1a14.500 14.500 0 1 0 10 22l-5-3a8 8 0 1 1-7-11z" fill="#7cc855" />
      <path d="M18 1h12l-2 17-5 4a8 8 0 1 1-7-13z" fill="#fff" />
      <path d="m16 9 2-8 4 0-3 9z" fill="#4fae3c" />
      <path d="m19 10 5-8 4-1-6 10z" fill="#e94e33" />
      <path d="m21 12 9-5-1 5-7 2z" fill="#f0883c" />
      <circle cx="22" cy="22" r="10" fill="#0a84d0" />
      <T x="22" y="27" fontSize="13" fontWeight="600" fill="#a8dcff" textAnchor="middle">R</T>
    </Icon>
  )],
  ["Visual Studio Code", (
    <Icon w={30} h={30}>
      <path d="M22 0 8 13 3 9 0 11v1l18 17 4 1z" fill="#1f8ad2" />
      <path d="M22 30 8 17l-5 4-3-2v-1L18 1l4-1z" fill="#0d6fb8" />
      <path d="m22 0 8 3v24l-8 3V9z" fill="#2fa4ee" />
      <path d="M22 9v12l-8-6z" fill="#2a3623" />
    </Icon>
  )],
  ["Microsoft Store", (
    <Icon w={30} h={30}>
      <path d="M8 7V1.500h14V7" stroke="#38b6e8" strokeWidth="2" />
      <path d="M0 6h30v20a4 4 0 0 1-4 4H4a4 4 0 0 1-4-4z" fill="#f0f0f0" />
      <path d="M9 12h5v5H9z" fill="#f03a17" /><path d="M15 12h5v5h-5z" fill="#7cb811" />
      <path d="M9 18h5v5H9z" fill="#0099dd" /><path d="M15 18h5v5h-5z" fill="#f7b500" />
    </Icon>
  )],
  ["XAMPP", (
    <Icon w={30} h={30}>
      <rect width="30" height="30" rx="3" fill="#e87324" />
      <path d="M15 9.500c-2 0-2.500-3-5.500-3s-5 4-3 6.500c1 1.200 1 2.800 0 4-2 2.500 0 6.500 3 6.500s3.500-3 5.500-3 2.500 3 5.500 3 5-4 3-6.500c-1-1.200-1-2.800 0-4 2-2.500 0-6.500-3-6.500s-3.500 3-5.500 3z" stroke="#fff" strokeWidth="2.600" />
      <path d="M11 11.500c0 2 1.500 2.500 4 3.500s4 1.500 4 3.500M19 11.500c0 2-1.500 2.500-4 3.500s-4 1.500-4 3.500" stroke="#fff" strokeWidth="2.200" />
    </Icon>
  )],
  ["Word", (
    <Icon w={28} h={27}>
      <path d="M14 4h13v19H14z" fill="#fff" stroke="#2b579a" />
      <path d="M16 8h9M16 11h9M16 14h9M16 17h9M16 20h9" stroke="#2b579a" strokeWidth="1.300" />
      <path d="M0 3 17 0v27L0 24z" fill="#2b579a" />
      <T x="8" y="18" fontSize="12" fontWeight="700" fill="#fff" textAnchor="middle">W</T>
    </Icon>
  )],
];

function Taskbar() {
  return (
    <div className="flex h-[46px] shrink-0 items-center bg-linear-to-r from-[#26331f] via-[#2c3823] to-[#233020] text-white">
      <button type="button" aria-label="Start" className="flex h-full w-[60px] shrink-0 items-center justify-center">
        <Icon><path d="M0 3l8.500-1.200v7.700H0zM9.500 1.700 20 0v9.500H9.500zM0 10.500h8.500v7.700L0 17zM9.500 10.500H20V20L9.500 18.300z" fill="#fff" /></Icon>
      </button>
      <label className="flex h-full w-[360px] shrink-0 items-center overflow-hidden border border-b-0 border-[#c9c9c9] bg-[#f2f2f2] pl-[14px]">
        <Icon w={21} h={21}>
          <circle cx="13" cy="8" r="6.500" stroke="#111" strokeWidth="1.500" />
          <path d="M8.500 12.500.5 20.500" stroke="#111" strokeWidth="1.500" />
        </Icon>
        <input aria-label="Type here to search" placeholder="Type here to search" className="min-w-0 flex-1 pl-[14px] pt-[2px] text-lg outline-none placeholder:text-[#333]" />
        <Icon w={96} h={45}>
          <path d="M0 45c16-18 72-20 96 0z" fill="#e9c7a0" />
          <path d="m12 17 29-7 6 25-29 8z" fill="#3f9c4c" />
          <path d="m14 16 12-2 5 24-12 3zM26 14l14-4 5 24-14 4z" fill="#fafafa" stroke="#c9cfe4" />
          <path d="m18 21 7-2m-6 6 7-2m-6 6 7-2m3-9 8-2m-7 6 8-2m-7 6 8-2" stroke="#8b8fc9" />
          <path d="m35 24 9-15 5 3-9 15-6 1z" fill="#f5a623" />
          <path d="m44 9 3-5 5 3-3 5z" fill="#e4574c" />
          <path d="M65 7c0-7 12-7 12 0" stroke="#1565d8" strokeWidth="2" />
          <path d="M59 19c0-18 24-18 24 0v19c0 4-24 4-24 0z" fill="#1a78f0" />
          <path d="M63 29c0-10 16-10 16 0v8H63z" fill="#0b55c9" />
          <path d="M63 34c4 4 12 4 16 0v3H63z" fill="#b59bff" />
          <path d="M61 15c6-5 14-5 20 0" stroke="#4db2ff" strokeWidth="2" />
        </Icon>
      </label>
      {apps.map(([name, icon]) => (
        <button key={name} type="button" aria-label={name} className={"flex h-full w-[62px] shrink-0 items-center justify-center " + (name === "Word" ? "bg-[#55604e]" : "")}>
          {icon}
        </button>
      ))}
      <div className="ml-auto flex h-full items-center pt-1">
        <button type="button" aria-label="Show hidden icons" className="mr-3"><Icon w={16} h={9}><path d="m.5 8.500 7.500-7 7.500 7" stroke="#fff" strokeWidth="1.300" /></Icon></button>
        <button type="button" aria-label="Unikey" className="mr-[10px]">
          <Icon>
            <path d="M.5.500h19v19H.5z" fill="#f7d9d9" stroke="#d99" />
            <text x="10" y="16" fontSize="17" fontWeight="700" fontFamily="'Liberation Sans',sans-serif" fill="#b3202a" textAnchor="middle">V</text>
          </Icon>
        </button>
        <button type="button" aria-label="Battery" className="mr-3">
          <Icon w={20} h={14}>
            <path d="M5.500 4.500h12v8h-14V9M18 7v4h1.500V7zM1 1.500v3h4v-3M2 0v2M4 0v2M3 4.500v4" stroke="#fff" strokeWidth="1.200" />
            <path d="M7 6h9v5H5V9z" fill="#fff" />
          </Icon>
        </button>
        <button type="button" aria-label="Network" className="mr-[10px]">
          <Icon w={17} h={16}>
            <path d="M1 15.500C1 7 8 1.500 15.500 1.500" stroke="#8b9187" strokeWidth="1.200" />
            <path d="M4.500 15.500c0-6 5-10 11-10M8 15.500c0-4 3-6.500 7.500-6.500" stroke="#fff" strokeWidth="1.200" />
            <circle cx="13.500" cy="13.500" r="1.800" fill="#fff" />
          </Icon>
        </button>
        <button type="button" aria-label="Volume" className="mr-[14px]">
          <Icon w={20} h={16}>
            <path d="M.5 5.500h3l4-4v13l-4-4h-3z" stroke="#fff" strokeWidth="1.200" />
            <path d="M10 5.500c1.500 1.500 1.500 3.500 0 5M13 3.500c3 2.500 3 6.500 0 9" stroke="#fff" strokeWidth="1.200" />
            <path d="M16 1.500c4 4 4 9 0 13" stroke="#8b9187" strokeWidth="1.200" />
          </Icon>
        </button>
        <button type="button" className="mr-4 text-sm">ENG</button>
        <button type="button" className="w-[78px] text-center text-sm leading-[23px]">3:43 PM<br />17/11/2024</button>
        <button type="button" aria-label="Notifications" className="ml-[22px] mr-[14px] h-[30px]">
          <Icon w={31} h={31}>
            <path d="M0 2h20v15H9l-4 4v-4H0z" fill="#fff" />
            <path d="M4 6.500h12M4 9.500h12M4 12.500h8" stroke="#26331f" />
            <circle cx="20" cy="20" r="9.500" fill="#2a3327" stroke="#999" />
            <T x="20" y="25" fontSize="14" fill="#fff" textAnchor="middle">1</T>
          </Icon>
        </button>
        <span className="-mt-1 mr-[5px] h-full w-px bg-[#6a7364]" />
      </div>
    </div>
  );
}

export default function App() {
  return (
    <div className="flex h-screen min-h-[700px] flex-col overflow-hidden bg-[#2a579a] font-['Open_Sans','Noto_Sans',sans-serif]">
      <TitleBar />
      <TabRow />
      <Ribbon />
      <div className="flex min-h-0 flex-1 bg-[#e6e6e6]">
        <NavigationPane />
        <VerticalRuler />
        <Workspace />
      </div>
      <StatusBar />
      <Taskbar />
    </div>
  );
}
